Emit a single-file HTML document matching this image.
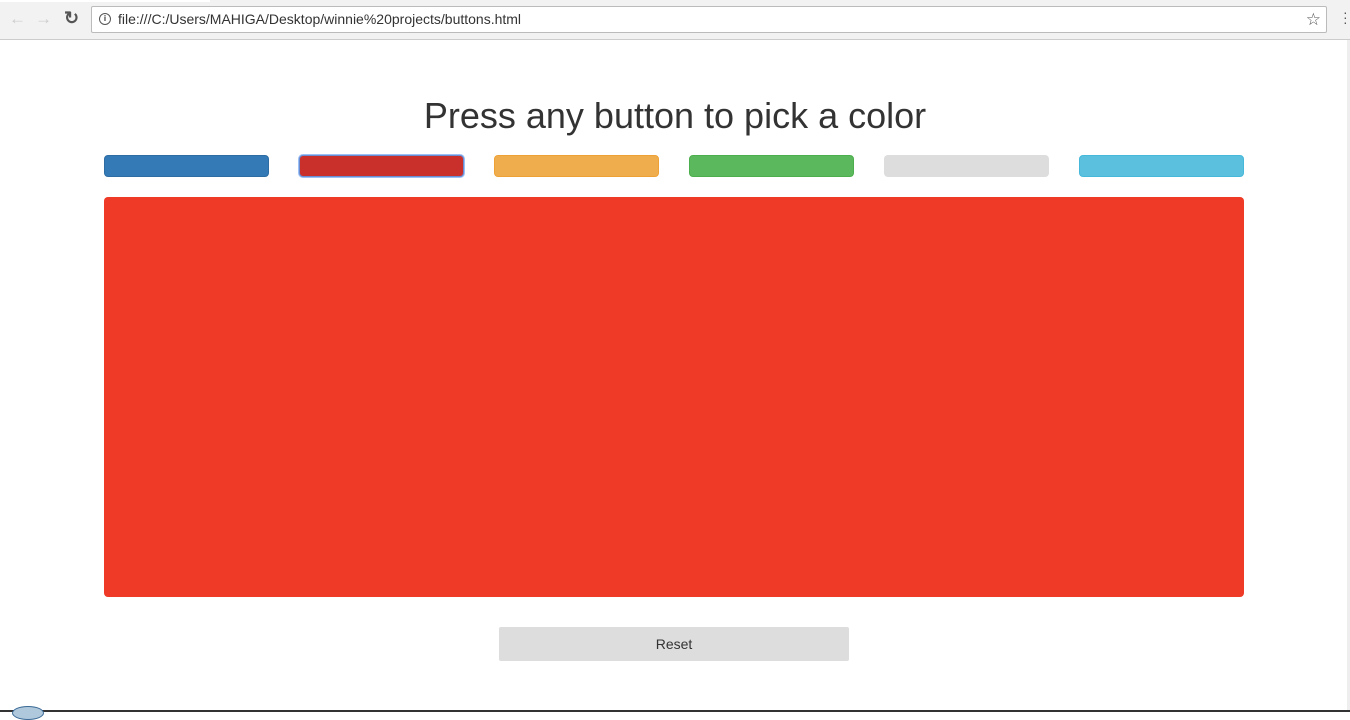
<!DOCTYPE html>
<html><head><style>
body{margin:0;width:1350px;height:712px;overflow:hidden;background:#fff;font-family:"Liberation Sans",sans-serif;position:relative}
.bar{position:absolute;left:0;top:0;width:1350px;height:39px;background:#f2f2f2;border-bottom:1px solid #ccc}
.url{position:absolute;left:91px;top:6px;width:1236px;height:27px;background:#fff;border:1px solid #bbb;border-radius:2px;box-sizing:border-box;font-size:14px;color:#333;line-height:25px;padding-left:26px}
.btn{position:absolute;top:155px;width:165px;height:22px;border-radius:4px;box-sizing:border-box}
h1{position:absolute;top:95px;left:0;width:1350px;text-align:center;margin:0;font-weight:400;font-size:36px;color:#333}
</style></head><body>
<div class="bar">
<div style="position:absolute;left:0;top:0;width:210px;height:2px;background:#fff"></div>
<span style="position:absolute;left:9px;top:9px;font-size:17px;color:#ccc">←</span>
<span style="position:absolute;left:35px;top:9px;font-size:17px;color:#ccc">→</span>
<span style="position:absolute;left:64px;top:8px;font-size:18px;color:#555;font-weight:bold">↻</span>
<div class="url"><span style="position:absolute;left:7px;top:6px;width:12px;height:12px;border:1.5px solid #555;border-radius:50%;box-sizing:border-box;font-size:8px;line-height:9px;text-align:center;font-weight:bold">i</span>file:///C:/Users/MAHIGA/Desktop/winnie%20projects/buttons.html<span style="position:absolute;right:5px;top:0;font-size:17px;color:#555">☆</span></div>
<span style="position:absolute;left:1343px;top:10px;font-size:14px;color:#555;line-height:5px">·<br>·<br>·</span>
</div>
<div style="position:absolute;right:0;top:40px;width:3px;height:672px;background:#eee"></div>
<h1>Press any button to pick a color</h1>
<div class="btn" style="left:104px;background:#337ab7;border:1px solid #2e6da4"></div>
<div class="btn" style="left:299px;background:#c9302c;border:1px solid #6a8cd0;box-shadow:0 0 0 1px #9cc0f5"></div>
<div class="btn" style="left:494px;background:#f0ad4e;border:1px solid #eea236"></div>
<div class="btn" style="left:689px;background:#5cb85c;border:1px solid #4cae4c"></div>
<div class="btn" style="left:884px;background:#ddd"></div>
<div class="btn" style="left:1079px;background:#5bc0de;border:1px solid #46b8da"></div>
<div style="position:absolute;left:104px;top:197px;width:1140px;height:400px;background:#ee3a27;border-radius:4px"></div>
<div style="position:absolute;left:499px;top:627px;width:350px;height:34px;background:#ddd;border-radius:2px;text-align:center;line-height:34px;font-size:14px;color:#333">Reset</div>
<div style="position:absolute;left:0;top:710px;width:1350px;height:2px;background:#333"></div>
<div style="position:absolute;left:12px;top:706px;width:30px;height:12px;border-radius:50%;background:#b0c8dc;border:1px solid #3a6a96"></div>
</body></html>
